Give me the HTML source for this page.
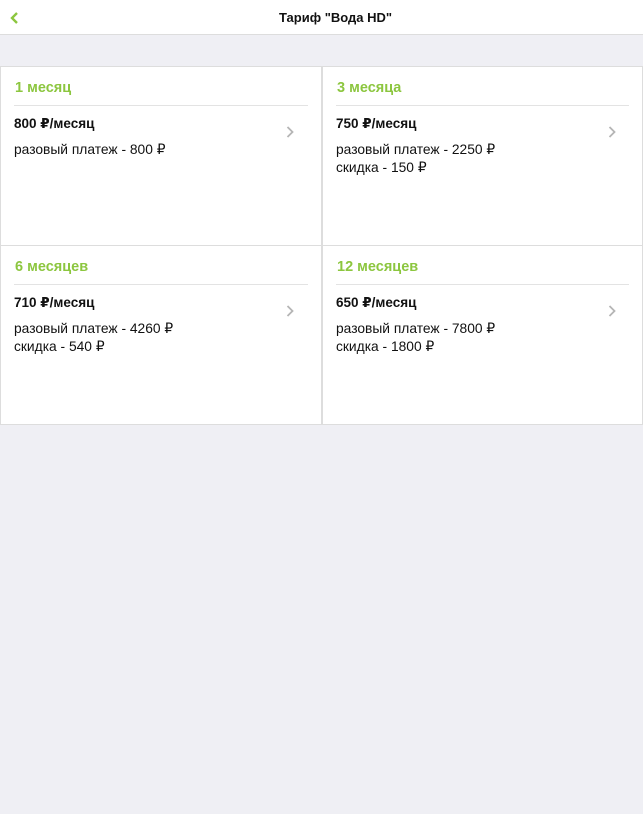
<!DOCTYPE html>
<html><head><meta charset="utf-8"><style>
*{margin:0;padding:0;box-sizing:border-box}
body{width:643px;height:814px;background:#efeff4;font-family:"Liberation Sans","DejaVu Sans",sans-serif;color:#111;position:relative;overflow:hidden}
.hdr{position:absolute;top:0;left:0;width:643px;height:35px;background:#fff;border-bottom:1px solid #ddd}
.hdr .t{position:absolute;left:0;right:0;top:10px;text-align:center;font-size:13px;font-weight:bold;color:#111;padding-left:28px}
.hdr svg{position:absolute;left:9px;top:11px}
.card{position:absolute;background:#fff;border:1px solid #ddd;width:322px;height:180px}
.card .ttl{position:absolute;left:14px;top:13px;font-size:14.5px;font-weight:bold;color:#8cc63f}
.card .ln{position:absolute;left:13px;right:13px;top:38px;border-top:1px solid #e3e3e3}
.card .p{position:absolute;left:13px;top:49px;font-size:13.5px;font-weight:bold}
.card .d{position:absolute;left:13px;top:74px;font-size:13.8px;line-height:18px}
.card svg{position:absolute;left:284px;top:58px}
</style></head><body>
<div class="hdr"><svg width="10" height="14" viewBox="0 0 10 14"><path d="M8 2L3 7l5 5" stroke="#8cc63f" stroke-width="2.4" fill="none"/></svg><div class="t">Тариф "Вода HD"</div></div>

<div class="card" style="left:0;top:66px"><div class="ttl">1 месяц</div><div class="ln"></div><div class="p">800 ₽/месяц</div><div class="d">разовый платеж - 800 ₽</div><svg width="10" height="14" viewBox="0 0 10 14"><path d="M2.5 2l5 5-5 5" stroke="#b5b5b5" stroke-width="1.8" fill="none"/></svg></div>
<div class="card" style="left:322px;top:66px;width:321px"><div class="ttl">3 месяца</div><div class="ln"></div><div class="p">750 ₽/месяц</div><div class="d">разовый платеж - 2250 ₽<br>скидка - 150 ₽</div><svg width="10" height="14" viewBox="0 0 10 14"><path d="M2.5 2l5 5-5 5" stroke="#b5b5b5" stroke-width="1.8" fill="none"/></svg></div>
<div class="card" style="left:0;top:245px"><div class="ttl">6 месяцев</div><div class="ln"></div><div class="p">710 ₽/месяц</div><div class="d">разовый платеж - 4260 ₽<br>скидка - 540 ₽</div><svg width="10" height="14" viewBox="0 0 10 14"><path d="M2.5 2l5 5-5 5" stroke="#b5b5b5" stroke-width="1.8" fill="none"/></svg></div>
<div class="card" style="left:322px;top:245px;width:321px"><div class="ttl">12 месяцев</div><div class="ln"></div><div class="p">650 ₽/месяц</div><div class="d">разовый платеж - 7800 ₽<br>скидка - 1800 ₽</div><svg width="10" height="14" viewBox="0 0 10 14"><path d="M2.5 2l5 5-5 5" stroke="#b5b5b5" stroke-width="1.8" fill="none"/></svg></div>
</body></html>
